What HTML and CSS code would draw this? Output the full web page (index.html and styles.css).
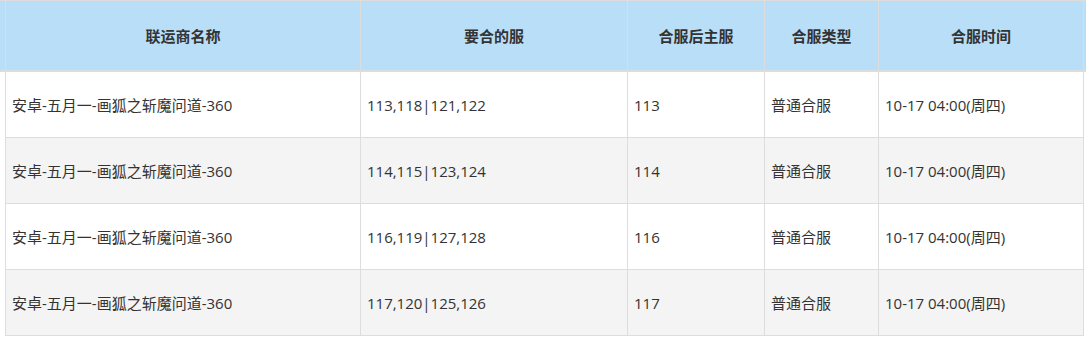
FILE: index.html
```html
<!DOCTYPE html>
<html lang="zh-CN">
<head>
<meta charset="utf-8">
<title>合服列表</title>
<link rel="stylesheet" href="styles.css">
</head>
<body>
<div class="wrap">
  <table class="merge-table">
    <colgroup>
      <col class="c1"><col class="c2"><col class="c3"><col class="c4"><col class="c5">
    </colgroup>
    <thead>
      <tr>
        <th>联运商名称</th>
        <th>要合的服</th>
        <th>合服后主服</th>
        <th>合服类型</th>
        <th>合服时间</th>
      </tr>
    </thead>
    <tbody>
      <tr>
        <td>安卓-五月一-画狐之斩魔问道-360</td>
        <td>113,118|121,122</td>
        <td>113</td>
        <td>普通合服</td>
        <td>10-17 04:00(周四)</td>
      </tr>
      <tr class="alt">
        <td>安卓-五月一-画狐之斩魔问道-360</td>
        <td>114,115|123,124</td>
        <td>114</td>
        <td>普通合服</td>
        <td>10-17 04:00(周四)</td>
      </tr>
      <tr>
        <td>安卓-五月一-画狐之斩魔问道-360</td>
        <td>116,119|127,128</td>
        <td>116</td>
        <td>普通合服</td>
        <td>10-17 04:00(周四)</td>
      </tr>
      <tr class="alt">
        <td>安卓-五月一-画狐之斩魔问道-360</td>
        <td>117,120|125,126</td>
        <td>117</td>
        <td>普通合服</td>
        <td>10-17 04:00(周四)</td>
      </tr>
    </tbody>
  </table>
</div>
</body>
</html>
```

FILE: styles.css
```css
html, body {
  margin: 0;
  padding: 0;
  background: #ffffff;
}

body {
  font-family: "Open Sans", "Noto Sans CJK SC", sans-serif;
  font-size: 15px;
  color: #333333;
}

.wrap {
  padding: 1px 0 0 5px;
  background: linear-gradient(to bottom,
    #dddddd 0, #dddddd 1px,
    #b9def8 1px, #b9def8 70px,
    #dddddd 70px, #dddddd 72px,
    transparent 72px) no-repeat;
}

.merge-table {
  border-collapse: separate;
  border-spacing: 0;
  table-layout: fixed;
  width: 1079px;
}

.c1 { width: 356px; }
.c2 { width: 267px; }
.c3 { width: 137px; }
.c4 { width: 114px; }
.c5 { width: 205px; }

.merge-table th,
.merge-table td {
  border-right: 1px solid #dddddd;
  vertical-align: middle;
  white-space: nowrap;
}

.merge-table th:first-child,
.merge-table td:first-child {
  border-left: 1px solid #dddddd;
}

.merge-table th {
  height: 69px;
  padding: 0;
  background: #b9def8;
  border-bottom: 2px solid #dddddd;
  font-weight: bold;
  text-align: center;
  color: #333333;
}

.merge-table td {
  height: 65px;
  padding: 0 0 0 6px;
  border-bottom: 1px solid #dddddd;
  text-align: left;
}

.merge-table tr.alt td {
  background: #f4f4f4;
}
```
